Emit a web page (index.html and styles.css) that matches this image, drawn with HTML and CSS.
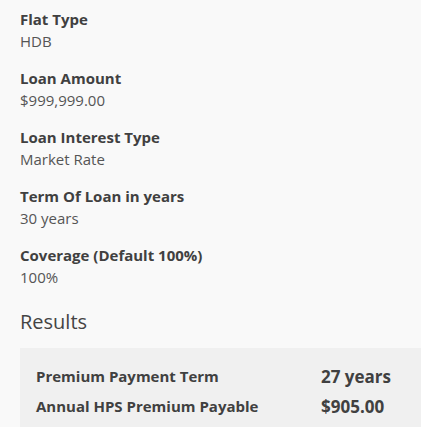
FILE: index.html
```html
<!DOCTYPE html>
<html>
<head>
<meta charset="utf-8">
<link rel="stylesheet" href="styles.css">
</head>
<body>
<div class="page">
  <div class="field">
    <div class="label">Flat Type</div>
    <div class="value">HDB</div>
  </div>
  <div class="field">
    <div class="label">Loan Amount</div>
    <div class="value">$999,999.00</div>
  </div>
  <div class="field">
    <div class="label">Loan Interest Type</div>
    <div class="value">Market Rate</div>
  </div>
  <div class="field">
    <div class="label">Term Of Loan in years</div>
    <div class="value">30 years</div>
  </div>
  <div class="field">
    <div class="label">Coverage (Default 100%)</div>
    <div class="value">100%</div>
  </div>
  <h2 class="results-title">Results</h2>
  <div class="results">
    <div class="row">
      <div class="r-label">Premium Payment Term</div>
      <div class="r-value">27 years</div>
    </div>
    <div class="row">
      <div class="r-label">Annual HPS Premium Payable</div>
      <div class="r-value">$905.00</div>
    </div>
  </div>
</div>
</body>
</html>
```
FILE: styles.css
```css
html, body {
  margin: 0;
  padding: 0;
  background: #f9f9f9;
}
body {
  font-family: "Open Sans", "Noto Sans", sans-serif;
  color: #444;
  overflow: hidden;
}
.page {
  padding: 8px 0 0 20px;
}
.field {
  margin-bottom: 15px;
}
.label {
  font-size: 15px;
  font-weight: 700;
  line-height: 22px;
  color: #404040;
}
.value {
  font-size: 15px;
  line-height: 22px;
  color: #555;
}
.results-title {
  margin: 20px 0 0 0;
  font-size: 20px;
  font-weight: 400;
  line-height: 28px;
  color: #444;
}
.results {
  margin-top: 12px;
  background: #f0f0f0;
  padding: 13px 16px 12px 16px;
}
.row {
  display: grid;
  grid-template-columns: 285px auto;
  align-items: center;
  height: 30px;
}
.r-label {
  font-size: 15px;
  font-weight: 700;
  color: #404040;
}
.r-value {
  font-size: 17px;
  font-weight: 700;
  color: #404040;
}
```
